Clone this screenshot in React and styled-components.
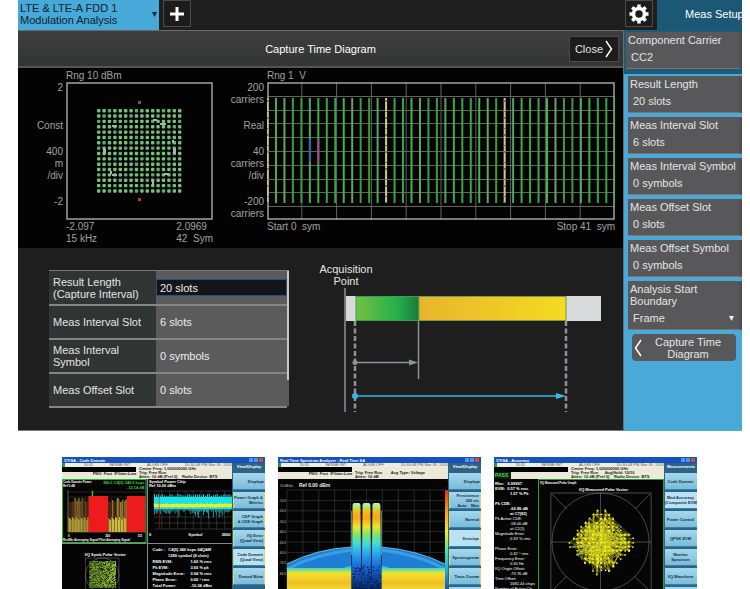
import styled, { createGlobalStyle } from "styled-components"

const GlobalStyle = createGlobalStyle`
    * { box-sizing: border-box; }
    body {
        margin: 0;
        background: white;
        font-family: "Liberation Sans", Arial, sans-serif;
        font-size: 11px;
        line-height: 12px;
    }
    button, input, select {
        font: inherit;
        color: inherit;
        margin: 0;
        padding: 0;
        border: 0;
        background: none;
        border-radius: 0;
    }
`;

// page -----------------------------------------------
const Page = styled.main`
    height: 100vh;
    overflow: hidden;
`;

const Instrument = styled.section`
    margin: 0 8px 0 18px;
    background: #1e1e1e;
    color: #e4e4e4;
    overflow: hidden;
`;

// top bar -----------------------------------------------
const TopBar = styled.header`
    display: flex;
    height: 30px;
`;

const ModeTab = styled.button`
    display: flex;
    align-items: center;
    justify-content: space-between;
    width: 141px;
    padding: 0 2px 2px;
    background: #46a9d8;
    color: #10222c;
    text-align: left;
`;

const SquareButton = styled.button`
    display: flex;
    align-items: center;
    justify-content: center;
    width: 28px;
    height: 27px;
    margin: 0 4px;
    background: #1c1c1c;
    border: 1px solid #4c4c4c;
    color: white;
`;

const Spacer = styled.div`
    flex: 1;
`;

const MenuTitle = styled.h2`
    width: 85px;
    margin: 0;
    padding: 8px 0 0 28px;
    background: #1b5876;
    color: white;
    font-size: 11px;
    font-weight: normal;
    white-space: nowrap;
    overflow: hidden;
`;

const Body = styled.div`
    display: flex;
`;

const Left = styled.div`
    flex: 1;
    min-width: 0;
    border-right: 1px solid #6c6c6c;
    border-bottom: 1px solid #7a7a7a;
`;

const TitleBar = styled.div`
    display: grid;
    grid-template-columns: 1fr auto 1fr;
    align-items: center;
    height: 38px;
    padding: 0 4px;
    background: linear-gradient(#3d3e3d, #333534);
    border-top: 1px solid #6a6a6a;
    border-bottom: 2px solid #555;
`;

const Title = styled.h1`
    grid-column: 2;
    margin: 0;
    color: white;
    font-size: 11px;
    font-weight: normal;
`;

const CloseButton = styled.button`
    justify-self: end;
    display: flex;
    align-items: center;
    gap: 2px;
    height: 26px;
    padding: 0 5px;
    background: #1c1c1c;
    border: 1px solid #4a4a4a;
`;

// charts -----------------------------------------------
const Charts = styled.div`
    display: flex;
    height: 180px;
    padding: 2px 8px 0 0;
    background: #030303;
    color: #a2a2a2;
    font-size: 10px;
`;

const Chart = styled.div`
    display: grid;
    flex: ${(p) => (p.$wide ? "1" : "0 0 195px")};
    grid-template-columns: ${(p) => (p.$wide ? "51px" : "45px")} 1fr;
    grid-template-rows: 12px 138px 24px;
    column-gap: 3px;
    white-space: pre;
`;

const ChartHead = styled.div`
    grid-column: 2;
`;

const Axis = styled.div`
    display: flex;
    flex-direction: column;
    justify-content: space-between;
    text-align: right;
`;

const AxisGroup = styled.div`
    height: ${(p) => p.$lines * 12}px;
`;

const ChartFoot = styled.div`
    grid-column: 2;
    display: flex;
    justify-content: space-between;
    padding-top: 1px;
`;

const Drawing = styled.svg`
    display: block;
    width: 100%;
    height: ${(p) => p.$h}px;
`;

// table + timing diagram -----------------------------------------------
const Lower = styled.div`
    display: flex;
    gap: 30px;
    height: 182px;
    padding: 15px 22px 0 31px;
`;

const Scroller = styled.div`
    display: flex;
    width: 240px;
    height: 136px;
    margin-top: 7px;
    background: #5b5b5c;
    border-top: 1px solid #777;
`;

const ScrollThumb = styled.div`
    width: 2px;
    height: 109px;
    background: #c4c8cc;
`;

const Params = styled.table`
    flex: 1;
    border-collapse: collapse;
    table-layout: fixed;

    tr { height: 34px; }
    th, td {
        padding: 0;
        border-bottom: 2px solid #858585;
    }
    th {
        width: 107px;
        padding-left: 4px;
        background: #303433;
        font-weight: normal;
        text-align: left;
        white-space: pre;
    }
`;

const ValueInput = styled.input`
    width: 100%;
    height: 17px;
    padding: 0 3px;
    border: 1px solid ${(p) => (p.$active ? "#27507c" : "transparent")};
    background: ${(p) => (p.$active ? "#141518" : "transparent")};
    color: #ececec;
`;

const Diagram = styled.div`
    flex: 1;
`;

const DiagramLabel = styled.div`
    width: 54px;
    height: 24px;
    text-align: center;
`;

// right menu -----------------------------------------------
const Side = styled.aside`
    width: 118px;
    background: #4aa9d6;
`;

const CarrierBox = styled.div`
    padding: 2px 0 5px 2px;
    background: #1f5a77;
`;

const MenuItem = styled.div`
    display: flex;
    flex-direction: column;
    gap: 5px;
    width: 100%;
    padding: 2px 0 5px 2px;
    background: #58585a;
    border: 0 solid #767676;
    border-bottom-width: 1px;
    border-right: 3px solid #505052;
    text-align: left;
`;

const MenuList = styled.div`
    display: flex;
    flex-direction: column;
    gap: 4px;
    padding: 2px 0 0 4px;
`;

const Value = styled.span`
    display: flex;
    align-items: center;
    padding: 0 5px 0 3px;
`;

const Choice = styled.select`
    flex: 1;
    height: 12px;
    appearance: none;
`;

const BackButton = styled.button`
    display: flex;
    align-items: center;
    width: 104px;
    height: 27px;
    margin: 0 4px;
    padding: 0 2px;
    background: #58585a;
    border-radius: 4px;
`;

const BackText = styled.span`
    flex: 1;
`;

// thumbnails -----------------------------------------------
const Gallery = styled.section`
    display: flex;
    gap: 13px;
    margin: 26px 53px 0 62px;
`;

const Thumb = styled.article`
    flex: 1;
    min-width: 0;
    height: 153px;
    background: #050505;
    color: white;
    font-size: 4px;
    line-height: 5px;
    font-weight: bold;
    white-space: pre;
    overflow: hidden;
`;

const ThumbTitle = styled.div`
    display: flex;
    justify-content: space-between;
    align-items: center;
    height: 6px;
    padding: 0 2px;
    background: #1452bd;
`;

const WindowButtons = styled.div`
    width: 4px;
    height: 4px;
    background: #dc4a2c;
    box-shadow: -5px 0 #5f8fe8, -10px 0 #5f8fe8;
`;

const ThumbRow = styled.div`
    display: flex;
`;

const ThumbMain = styled.div`
    flex: 1;
    min-width: 0;
`;

const ThumbStatus = styled.div`
    display: flex;
    justify-content: space-between;
    height: 4px;
    line-height: 4px;
    padding-left: 22px;
    background: linear-gradient(to right, #18a038 3px, #f0eee0 3px);
    color: #555;
    font-weight: normal;
`;

const ThumbInfo = styled.div`
    display: flex;
    height: 12px;
    background: #ece9d8;
    color: #222;
    line-height: 4px;
`;

const Readout = styled.div`
    width: 74px;
    border-top: 5px solid black;
    text-align: right;
    margin-right: 3px;
`;

const ThumbMenu = styled.div`
    display: flex;
    flex-direction: column;
    gap: 2px;
    width: 33px;
    height: 147px;
    padding-left: 1px;
    background: #2e6388;
    text-align: ${(p) => (p.$center ? "center" : "right")};
`;

const ThumbMenuHead = styled.div`
    height: 8px;
    padding-top: 1px;
    text-align: center;
`;

const ThumbKey = styled.div`
    display: flex;
    flex-direction: column;
    justify-content: center;
    flex: 0 0 17px;
    padding-right: 1px;
    background: ${(p) => (p.$on ? "#b9e3f5" : "linear-gradient(#a5d8ec, #79bcdb)")};
    border-bottom: 1px solid #3c7fa4;
    ${(p) => p.$group && "border-left: 1px solid #d5df62; border-right: 1px solid #d5df62;"}
    color: #14303e;
`;

const Quad = styled.div`
    display: grid;
    grid-template-columns: 1fr 1fr;
    column-gap: 1px;
    background: #888;

    > * { background: #050505; }
`;

const Readings = styled.div`
    padding: 3px 0 0 5px;
    line-height: 6px;
    border-top: 1px solid #888;
`;

const Reading = styled.div`
    display: grid;
    grid-template-columns: 38px 1fr;
`;

const Accuracy = styled.div`
    width: 44px;
    padding: 2px 1px;
    background: #050505;
`;

const AccuracyLine = styled.div`
    padding-left: ${(p) => (p.$in ? "15px" : "0")};
    font-weight: ${(p) => (p.$bold ? "bold" : "normal")};
`;

const PassBadge = styled.span`
    display: block;
    width: 17px;
    height: 7px;
    padding-left: 1px;
    background: #082008;
    color: #50d850;
    text-align: left;
    font-size: 5px;
    line-height: 7px;
`;

// data -----------------------------------------------
const params = [
    ["Result Length\n(Capture Interval)", "20 slots"],
    ["Meas Interval Slot", "6 slots"],
    ["Meas Interval\nSymbol", "0 symbols"],
    ["Meas Offset Slot", "0 slots"],
];

const menuItems = [
    ["Result Length", "20 slots"],
    ["Meas Interval Slot", "6 slots"],
    ["Meas Interval Symbol", "0 symbols"],
    ["Meas Offset Slot", "0 slots"],
    ["Meas Offset Symbol", "0 symbols"],
];

const readings = [
    ["RMS EVM:", "1.60 % rms"],
    ["Pk EVM:", "3.65 % pk"],
    ["Magnitude Error:", "0.94 % rms"],
    ["Phase Error:", "0.60 ° rms"],
    ["Total Power:", "-10.24 dBm"],
];

const accuracy = [
    ["Rho:   0.99997", 0, 1], ["EVM:  0.57 % rms", 0, 1], ["1.57 % Pk", 1, 1], ["", 0, 0],
    ["Pk CDE:", 0, 1], ["-62.89 dB", 1, 1], ["at C7(82)", 1, 1],
    ["Pk Active CDE:", 0, 0], ["-58.00 dB", 1, 0], ["at C2(1)", 1, 0],
    ["Magnitude Error:", 0, 0], ["0.33 % rms", 1, 0], ["", 0, 0],
    ["Phase Error:", 0, 0], ["0.32 ° rms", 1, 0],
    ["Frequency Error:", 0, 0], ["0.30 Hz", 1, 0],
    ["I/Q Origin Offset:", 0, 0], ["-73.76 dB", 1, 0],
    ["Time Offset:", 0, 0], ["1682.44 chips", 1, 0], ["Number of Active Ch:", 0, 0],
];

// small repeatable noise source
function noise(seed) {
    let s = seed;
    return () => {
        s = (s * 16807) % 2147483647;
        return s / 2147483647;
    };
}

const range = (n) => Array.from({ length: n }, (_, i) => i);
const greens = ["#39a548", "#3fae42", "#52a763", "#3a9c3f", "#62a760", "#43b34a"];

function Constellation() {
    return (
        <Drawing $h={138} viewBox="0 0 147 138">
            <rect x="1" y="1" width="145" height="136" fill="none" stroke="#a2a2a2" strokeWidth="1.5" />
            {range(256).map((i) => (
                <rect key={i} x={31 + (i % 16) * 5.4} y={27 + Math.floor(i / 16) * 5.35}
                    width="3.4" height="3.4" rx="1" fill={i % 5 === 2 ? "#5ca880" : "#74c474"} />
            ))}
            {/* pilot and sync symbols */}
            <g fill="#b6a9bb">
                <rect x="46" y="43" width="5" height="2" />
                <rect x="87" y="37" width="4" height="2" />
                <rect x="94" y="41" width="6" height="2" />
                <rect x="37" y="67" width="3" height="5" />
                <rect x="107" y="67" width="3" height="5" />
                <rect x="106" y="58" width="2" height="3" />
                <rect x="44" y="89" width="2" height="3" />
                <rect x="46" y="92" width="5" height="2" />
                <rect x="98" y="91" width="5" height="2" />
                <rect x="86" y="98" width="2" height="5" />
            </g>
            <rect x="72" y="19" width="3" height="3" fill="#a83f3b" />
            <rect x="72" y="116" width="3" height="3" fill="#a83f3b" />
        </Drawing>
    )
}

function SymbolChart() {
    return (
        <Drawing $h={138} viewBox="0 0 348 138" preserveAspectRatio="none">
            <g stroke="#626262" strokeWidth="1">
                {range(9).map((i) => <path key={i} d={`M${34.8 * (i + 1)} 0V138`} />)}
                {range(9).map((i) => <path key={i} d={`M0 ${Math.round(13.8 * (i + 1)) + 0.5}H348`} />)}
            </g>
            <rect x="1" y="1" width="346" height="136" fill="none" stroke="#a2a2a2" strokeWidth="1.5" />
            {range(42).map((i) => (
                <path key={i} d={`M${0.5 + i * 8.47} 16V121`} strokeWidth="2"
                    stroke={i % 14 === 0 ? "#d2cb80" : greens[(i * 5 + (i >> 2)) % 6]} />
            ))}
            {[0, 14, 28].map((i) => (
                <path key={i} d={`M${0.5 + i * 8.47} 18V121`} strokeWidth="2" stroke="#746a7a" strokeDasharray="2 9 1 5" />
            ))}
            <path d="M42.9 57V80" stroke="#3762a8" strokeWidth="2" />
            <path d="M51.3 57V80" stroke="#a3448e" strokeWidth="2" />
        </Drawing>
    )
}

function TimingDiagram() {
    return (
        <Drawing $h={127} viewBox="0 0 282 127" preserveAspectRatio="xMinYMin meet">
            <defs>
                <linearGradient id="slotGreen">
                    <stop offset="0" stopColor="#74c043" />
                    <stop offset="0.65" stopColor="#24b14a" />
                    <stop offset="1" stopColor="#187a3c" />
                </linearGradient>
                <linearGradient id="slotYellow">
                    <stop offset="0" stopColor="#e8b52c" />
                    <stop offset="1" stopColor="#f5da22" />
                </linearGradient>
            </defs>
            <rect x="27" y="9" width="255" height="25" fill="#d9dadb" />
            <rect x="37" y="9.5" width="63" height="24" fill="url(#slotGreen)" stroke="#3f9a5a" />
            <rect x="100" y="9.5" width="147" height="24" fill="url(#slotYellow)" stroke="#759b51" />
            <g stroke="#8e939b" strokeWidth="1.5" fill="none">
                <path d="M26 1V125" />
                <path d="M99.5 34V92" />
                <path d="M36 34V125M247 34V125" strokeWidth="2.5" strokeDasharray="5 2.5" />
                <path d="M36 75.5H92" />
            </g>
            <circle cx="36" cy="75.5" r="2.5" fill="#8e939b" />
            <path d="M90 72.5L99 75.5L90 78.5Z" fill="#8e939b" />
            <path d="M36 109H240" stroke="#35b9e8" strokeWidth="1.5" />
            <circle cx="36" cy="109" r="3" fill="#35b9e8" />
            <path d="M237 106L247 109L237 112Z" fill="#35b9e8" />
        </Drawing>
    )
}

function GearIcon() {
    return (
        <svg width="20" height="20" viewBox="0 0 20 20" fill="none" stroke="white">
            <circle cx="10" cy="10" r="5.5" strokeWidth="3.5" />
            {range(8).map((i) => (
                <path key={i} d="M10 0.5V4" strokeWidth="3.5" transform={`rotate(${i * 45} 10 10)`} />
            ))}
        </svg>
    )
}

function Key({ lines, on, group }) {
    return (
        <ThumbKey $on={on} $group={group}>
            {lines.map((l) => <span key={l}>{l}</span>)}
        </ThumbKey>
    )
}

function ThumbFrame({ title, head, keys, center, on, info, badge, children }) {
    return (
        <Thumb>
            <ThumbTitle><span>{title}</span><WindowButtons /></ThumbTitle>
            <ThumbRow>
                <ThumbMain>
                    <ThumbStatus><span>50 Ω</span><span>SENSE:INT</span><span>ALIGN OFF</span><span>10:30:48 PM Mar 09, 2010</span></ThumbStatus>
                    <ThumbInfo>
                        <Readout>{badge || "PNO: Fast  IFGain:Low"}</Readout>
                        <div>{info}</div>
                    </ThumbInfo>
                    {children}
                </ThumbMain>
                <ThumbMenu $center={center}>
                    <ThumbMenuHead>{head}</ThumbMenuHead>
                    {keys.map((k, i) => <Key key={i} lines={k} on={i === on} group={!center && i > 0} />)}
                </ThumbMenu>
            </ThumbRow>
        </Thumb>
    )
}

function CodeDomainThumb() {
    const r = noise(41);
    const bars = range(42).map((i) => ({
        x: i < 21 ? 6 + i : 26 + i,
        top: 19 + Math.floor(r() * 5),
        color: ["#8a682b", "#5e3c18", "#a2823a", "#3a2a16"][Math.floor(r() * 4)],
    }));
    return (
        <ThumbFrame title="XY/SA - Code Domain" head="View/Display" on={4}
            info={"Center Freq: 1.000000000 GHz\nTrig: Free Run\nAtten: 10 dB (Pref 0)    Radio Device: BTS"}
            keys={[["Display▸"], ["Power Graph &", "Metrics"], ["CDP Graph", "& CDE Graph"], ["I/Q Error", "(Quad View)"],
                ["Code Domain", "(Quad View)"], ["Demod Bits▸"]]}>
            <Quad>
                <Drawing $h={64} viewBox="0 0 86 64" preserveAspectRatio="none">
                    <path d="M6 13H85M6 18H85M6 24H85M6 30H85M6 36H85M6 42H85M6 48H85" stroke="#444" strokeWidth="0.5" />
                    <path d="M6 11V53H85" stroke="#aaa" strokeWidth="0.5" fill="none" />
                    {bars.map((b, i) => (
                        <g key={i}>
                            <rect x={b.x} y={b.top} width="1" height={53 - b.top} fill={b.color} />
                            <rect x={b.x} y={38 + (i % 4)} width="1" height={15 - (i % 4)} fill={i % 3 ? "#d0c64b" : "#95782c"} />
                        </g>
                    ))}
                    <rect x="27" y="17" width="20" height="36" fill="#ed1b1b" />
                    <rect x="66" y="17" width="19" height="36" fill="#ed1b1b" />
                    <path d="M31 12V17" stroke="#22d422" strokeWidth="1.5" />
                    <g fill="white" fontSize="3">
                        <text x="1" y="4">Code Domain Power</text>
                        <text x="1" y="8">Ref 0 dB</text>
                        <text x="6" y="58">0</text><text x="44" y="58">256</text><text x="77" y="58">511</text>
                        <text x="1" y="62">RvsMkr  Averaging Signal Pilot   Averaging Signal</text>
                    </g>
                    <g fill="#2fd83a" fontSize="4" textAnchor="end"><text x="84" y="5">Mkr1 C4(0) 240.0 ksps</text><text x="84" y="10">-12.14 dB</text></g>
                    <rect x="0.5" y="0.5" width="85" height="63" fill="none" stroke="#24b934" />
                </Drawing>
                <Drawing $h={64} viewBox="0 0 86 64" preserveAspectRatio="none">
                    <path d="M6 12H85M6 22H85M6 38H85M6 44H85M6 50H85M14 12V50M22 12V50M30 12V50M38 12V50M46 12V50M54 12V50M62 12V50M70 12V50M78 12V50" stroke="#555" strokeWidth="0.5" />
                    <rect x="6" y="18" width="80" height="12" fill="#18e3e8" />
                    {range(80).map((i) => <rect key={i} x={6 + i} y="30" width="1" height={1 + r() * r() * 9} fill="#37939c" />)}
                    {range(40).map((i) => <rect key={i} x={6 + i * 2} y={17 - r() * 2} width="1" height="3" fill="#18e3e8" />)}
                    <rect x="6" y="25" width="80" height="3" fill="#eded22" />
                    {range(80).map((i) => <rect key={i} x={6 + i} y={24 + r() * 2} width="1" height="3" fill="#eded22" />)}
                    <path d="M11.5 12V50" stroke="#d02020" strokeWidth="0.5" />
                    <g fill="white" fontSize="4">
                        <text x="1" y="4">Symbol Power Chip</text><text x="1" y="8">Ref 10.00 dBm</text>
                        <text x="1" y="57">0</text><text x="41" y="57">Symbol</text><text x="75" y="57">2560</text>
                    </g>
                </Drawing>
                <Drawing $h={70} viewBox="0 0 86 70" preserveAspectRatio="none">
                    <path d="M0 0.5H86" stroke="#888" />
                    <text x="44" y="13" fill="white" fontSize="4" textAnchor="middle">I/Q Symb Polar Vector</text>
                    <rect x="24" y="15" width="34" height="34" fill="none" stroke="#777" strokeWidth="0.5" />
                    <circle cx="41" cy="32" r="17" fill="none" stroke="#888" strokeWidth="0.5" />
                    {range(729).map((i) => (
                        <rect key={i} x={28 + (i % 27)} y={18 + Math.floor(i / 27)} width="1" height="1"
                            fill={["#6bb432", "#2f7a2c", "#c4cd35", "#89a62a", "#2c2c12"][Math.floor(r() * 5)]} />
                    ))}
                </Drawing>
                <Readings>
                    <div>Code : &nbsp; C4(0) 240 ksps 64QAM</div>
                    <div>{"              1280 symbol (8 slots)"}</div>
                    {readings.map(([k, v]) => <Reading key={k}><span>{k}</span><span>{v}</span></Reading>)}
                </Readings>
            </Quad>
        </ThumbFrame>
    )
}

function SpectrumThumb() {
    const r = noise(97);
    return (
        <ThumbFrame title="Real Time Spectrum Analyzer - Real Time SA" head="View/Display" on={3}
            info={"\nTrig: Free Run        Avg Type: Voltage\nAtten: 10 dB"}
            keys={[["Display▸"], ["Persistence", "300 ms", "Auto    Man"], ["Normal"], ["Density▸"], ["Spectrogram▸"], ["Trace Zoom▸"], ["More"]]}>
            <Drawing $h={131} viewBox="0 0 171 131" preserveAspectRatio="none">
                <defs>
                    <linearGradient id="heat" x1="0" y1="0" x2="0" y2="1">
                        <stop offset="0" stopColor="#f02a10" /><stop offset="0.2" stopColor="#ff9c10" />
                        <stop offset="0.4" stopColor="#f2ee20" /><stop offset="0.6" stopColor="#35e2b8" />
                        <stop offset="0.8" stopColor="#1d9ae8" /><stop offset="1" stopColor="#1238c8" />
                    </linearGradient>
                    <linearGradient id="carrier" gradientUnits="userSpaceOnUse" x1="0" y1="24" x2="0" y2="131">
                        <stop offset="0" stopColor="#a8f2ee" /><stop offset="0.05" stopColor="#c9dc40" />
                        <stop offset="0.09" stopColor="#f7b51e" /><stop offset="0.14" stopColor="#f7a51e" />
                        <stop offset="0.22" stopColor="#f0e424" /><stop offset="0.3" stopColor="#7fe56a" />
                        <stop offset="0.38" stopColor="#3fdcd8" /><stop offset="0.48" stopColor="#27a2ec" />
                        <stop offset="0.62" stopColor="#155fce" /><stop offset="0.85" stopColor="#05113c" />
                    </linearGradient>
                    <linearGradient id="floor" x1="0" y1="0" x2="0" y2="1">
                        <stop offset="0" stopColor="#1f94e0" /><stop offset="0.08" stopColor="#52dbb2" />
                        <stop offset="0.18" stopColor="#f0e42c" /><stop offset="0.4" stopColor="#f2bd24" />
                        <stop offset="0.6" stopColor="#e8e838" /><stop offset="0.9" stopColor="#38c8c0" />
                    </linearGradient>
                </defs>
                <g stroke="#4a4a4a" strokeWidth="0.5">
                    {range(11).map((i) => <path key={i} d={`M${9 + i * 16} 11V131`} />)}
                    {range(12).map((i) => <path key={i} d={`M9 ${11 + i * 10.4}H168`} />)}
                </g>
                <path d="M9 85Q38 70 74 68V131H9ZM168 85Q140 71 104 68V131H168Z" fill="#207fd5" />
                <path d="M9 90Q38 75 74 71M168 90Q140 75 104 71" stroke="#3c9ee4" fill="none" strokeWidth="3" />
                <path d="M9 85Q38 70 74 68M168 85Q140 71 104 68" stroke="#83e5ee" fill="none" strokeWidth="0.7" />
                <path d="M9 89H66L74 86V131H9ZM104 86L112 89H168V131H104Z" fill="url(#floor)" />
                <rect x="74" y="70" width="30" height="61" fill="#082454" />
                {[74, 84, 94].map((x) => (
                    <path key={x} d={`M${x} 131L${x + 1} 27Q${x + 1} 24 ${x + 3} 24H${x + 7}Q${x + 9} 24 ${x + 9} 27L${x + 10} 131Z`} fill="url(#carrier)" />
                ))}
                <path d="M84 36V131M94 36V131" stroke="#0a2a6a" strokeWidth="0.7" />
                {range(220).map((i) => <rect key={i} x={75 + r() * 28} y={86 + r() * 44} width="1" height="1" fill={r() > 0.4 ? "#04081d" : "#1770c0"} />)}
                <path d="M74 76V32M104 76V32" stroke="#6bc5df" strokeWidth="0.7" />
                <rect x="168" y="11" width="3" height="105" fill="url(#heat)" />
                <g fill="#eee" fontSize="4">
                    <text x="2" y="8" fontSize="3" fill="#999">10 dB/div</text>
                    <text x="21" y="8" fontSize="5">Ref 0.00 dBm</text>
                    {range(8).map((i) => <text key={i} x="1" y={23 + i * 10.4} fontSize="3" fill="#999">-{i + 1}0.0</text>)}
                </g>
            </Drawing>
        </ThumbFrame>
    )
}

function PolarThumb() {
    const r = noise(1234);
    // vertices spread over a diamond with cut corners, joined by chords
    const pts = range(1000)
        .map(() => [Math.round((r() * 2 - 1) * 8) * 4, Math.round((r() * 2 - 1) * 8) * 4])
        .filter(([x, y]) => Math.abs(x) + Math.abs(y) <= 37)
        .slice(0, 300)
        .map(([x, y]) => [63 + x + r(), 63 + y + r()]);
    return (
        <ThumbFrame title="XY/SA - Accuracy" head="Measurements" center on={1} badge={<PassBadge>PASS</PassBadge>}
            info={"Center Freq: 1.000000000 GHz\nTrig: Free Run      Avg|Hold: 10/10\nAtten: 10 dB (Pref 0)    Radio Device: BTS"}
            keys={[["Code Domain"], ["Mod Accuracy", "(Composite EVM)"], ["Power Control"], ["QPSK EVM"],
                ["Monitor", "Spectrum"], ["I/Q Waveform"], ["More"]]}>
            <ThumbRow>
                <Accuracy>
                    {accuracy.map(([t, indent, bold], i) => <AccuracyLine key={i} $in={indent} $bold={bold}>{t || " "}</AccuracyLine>)}
                </Accuracy>
                <ThumbMain>
                    <Drawing $h={131} viewBox="0 0 127 131" preserveAspectRatio="none">
                        <rect x="0.5" y="0.5" width="126" height="130" fill="#050505" stroke="#25a332" />
                        <text x="2" y="5" fill="white" fontSize="3">I/Q Measured Polar Graph</text>
                        <text x="66" y="12" fill="white" fontSize="4" textAnchor="middle">I/Q Measured Polar Vector</text>
                        <g fill="none" stroke="#777" strokeWidth="0.6">
                            <rect x="13" y="14" width="101" height="101" />
                            <circle cx="63" cy="63" r="49" />
                            <path d="M13 63H114M63 14V115M14 15L29 30M113 15L98 30M29 97L14 112M97 97L113 112" />
                        </g>
                        <polyline points={pts.map((p) => p.join(",")).join(" ")} fill="none" stroke="#d9d51c" strokeWidth="0.4" />
                        {pts.map(([x, y], i) => <rect key={i} x={x - 0.5} y={y - 0.5} width="1.5" height="1.5" fill={i % 7 ? "#f3ee27" : "#4b6f9d"} />)}
                    </Drawing>
                </ThumbMain>
            </ThumbRow>
        </ThumbFrame>
    )
}

export default function App() {
    return (
        <Page>
            <GlobalStyle />
            <Instrument>
                <TopBar>
                    <ModeTab>
                        <span>LTE &amp; LTE-A FDD 1<br />Modulation Analysis</span>
                        <svg width="5" height="5" viewBox="0 0 5 5"><path d="M0 0H5L2.5 5Z" fill="#10222c" /></svg>
                    </ModeTab>
                    <SquareButton aria-label="Add screen">
                        <svg width="14" height="14" viewBox="0 0 14 14"><path d="M7 0V14M0 7H14" stroke="white" strokeWidth="3" /></svg>
                    </SquareButton>
                    <Spacer />
                    <SquareButton aria-label="Settings"><GearIcon /></SquareButton>
                    <MenuTitle>Meas Setup</MenuTitle>
                </TopBar>
                <Body>
                    <Left>
                        <TitleBar>
                            <Title>Capture Time Diagram</Title>
                            <CloseButton>
                                Close
                                <svg width="8" height="18" viewBox="0 0 8 18"><path d="M1 1L6.5 9L1 17" fill="none" stroke="white" strokeWidth="1.5" /></svg>
                            </CloseButton>
                        </TitleBar>
                        <Charts>
                            <Chart>
                                <ChartHead>Rng 10 dBm</ChartHead>
                                <Axis>
                                    <AxisGroup $lines={2}>2</AxisGroup>
                                    <AxisGroup $lines={1}>Const</AxisGroup>
                                    <AxisGroup $lines={3}>{"400\nm\n/div"}</AxisGroup>
                                    <AxisGroup $lines={2}>-2</AxisGroup>
                                </Axis>
                                <Constellation />
                                <ChartFoot>
                                    <span>{"-2.097\n15 kHz"}</span>
                                    <span>{"2.0969\n42  Sym"}</span>
                                </ChartFoot>
                            </Chart>
                            <Chart $wide>
                                <ChartHead>Rng 1  V</ChartHead>
                                <Axis>
                                    <AxisGroup $lines={2}>{"200\ncarriers"}</AxisGroup>
                                    <AxisGroup $lines={1}>Real</AxisGroup>
                                    <AxisGroup $lines={3}>{"40\ncarriers\n/div"}</AxisGroup>
                                    <AxisGroup $lines={2}>{"-200\ncarriers"}</AxisGroup>
                                </Axis>
                                <SymbolChart />
                                <ChartFoot>
                                    <span>Start 0  sym</span>
                                    <span>Stop 41  sym</span>
                                </ChartFoot>
                            </Chart>
                        </Charts>
                        <Lower>
                            <Scroller>
                                <Params>
                                    <tbody>
                                        {params.map(([label, value], i) => (
                                            <tr key={label}>
                                                <th scope="row"><label htmlFor={`param${i}`}>{label}</label></th>
                                                <td><ValueInput id={`param${i}`} defaultValue={value} $active={i === 0} /></td>
                                            </tr>
                                        ))}
                                    </tbody>
                                </Params>
                                <ScrollThumb />
                            </Scroller>
                            <Diagram>
                                <DiagramLabel>Acquisition<br />Point</DiagramLabel>
                                <TimingDiagram />
                            </Diagram>
                        </Lower>
                    </Left>
                    <Side>
                        <CarrierBox>
                            <MenuItem as="button"><span>Component Carrier</span><Value>CC2</Value></MenuItem>
                        </CarrierBox>
                        <MenuList>
                            {menuItems.map(([label, value]) => (
                                <MenuItem as="button" key={label}><span>{label}</span><Value>{value}</Value></MenuItem>
                            ))}
                            <MenuItem>
                                <label htmlFor="boundary">Analysis Start<br />Boundary</label>
                                <Value>
                                    <Choice id="boundary"><option>Frame</option></Choice>
                                    <svg width="5" height="5" viewBox="0 0 5 5"><path d="M0 0H5L2.5 5Z" fill="#eee" /></svg>
                                </Value>
                            </MenuItem>
                            <BackButton>
                                <svg width="8" height="18" viewBox="0 0 8 18"><path d="M7 1L1.5 9L7 17" fill="none" stroke="white" strokeWidth="1.5" /></svg>
                                <BackText>Capture Time Diagram</BackText>
                            </BackButton>
                        </MenuList>
                    </Side>
                </Body>
            </Instrument>
            <Gallery>
                <CodeDomainThumb />
                <SpectrumThumb />
                <PolarThumb />
            </Gallery>
        </Page>
    )
}
